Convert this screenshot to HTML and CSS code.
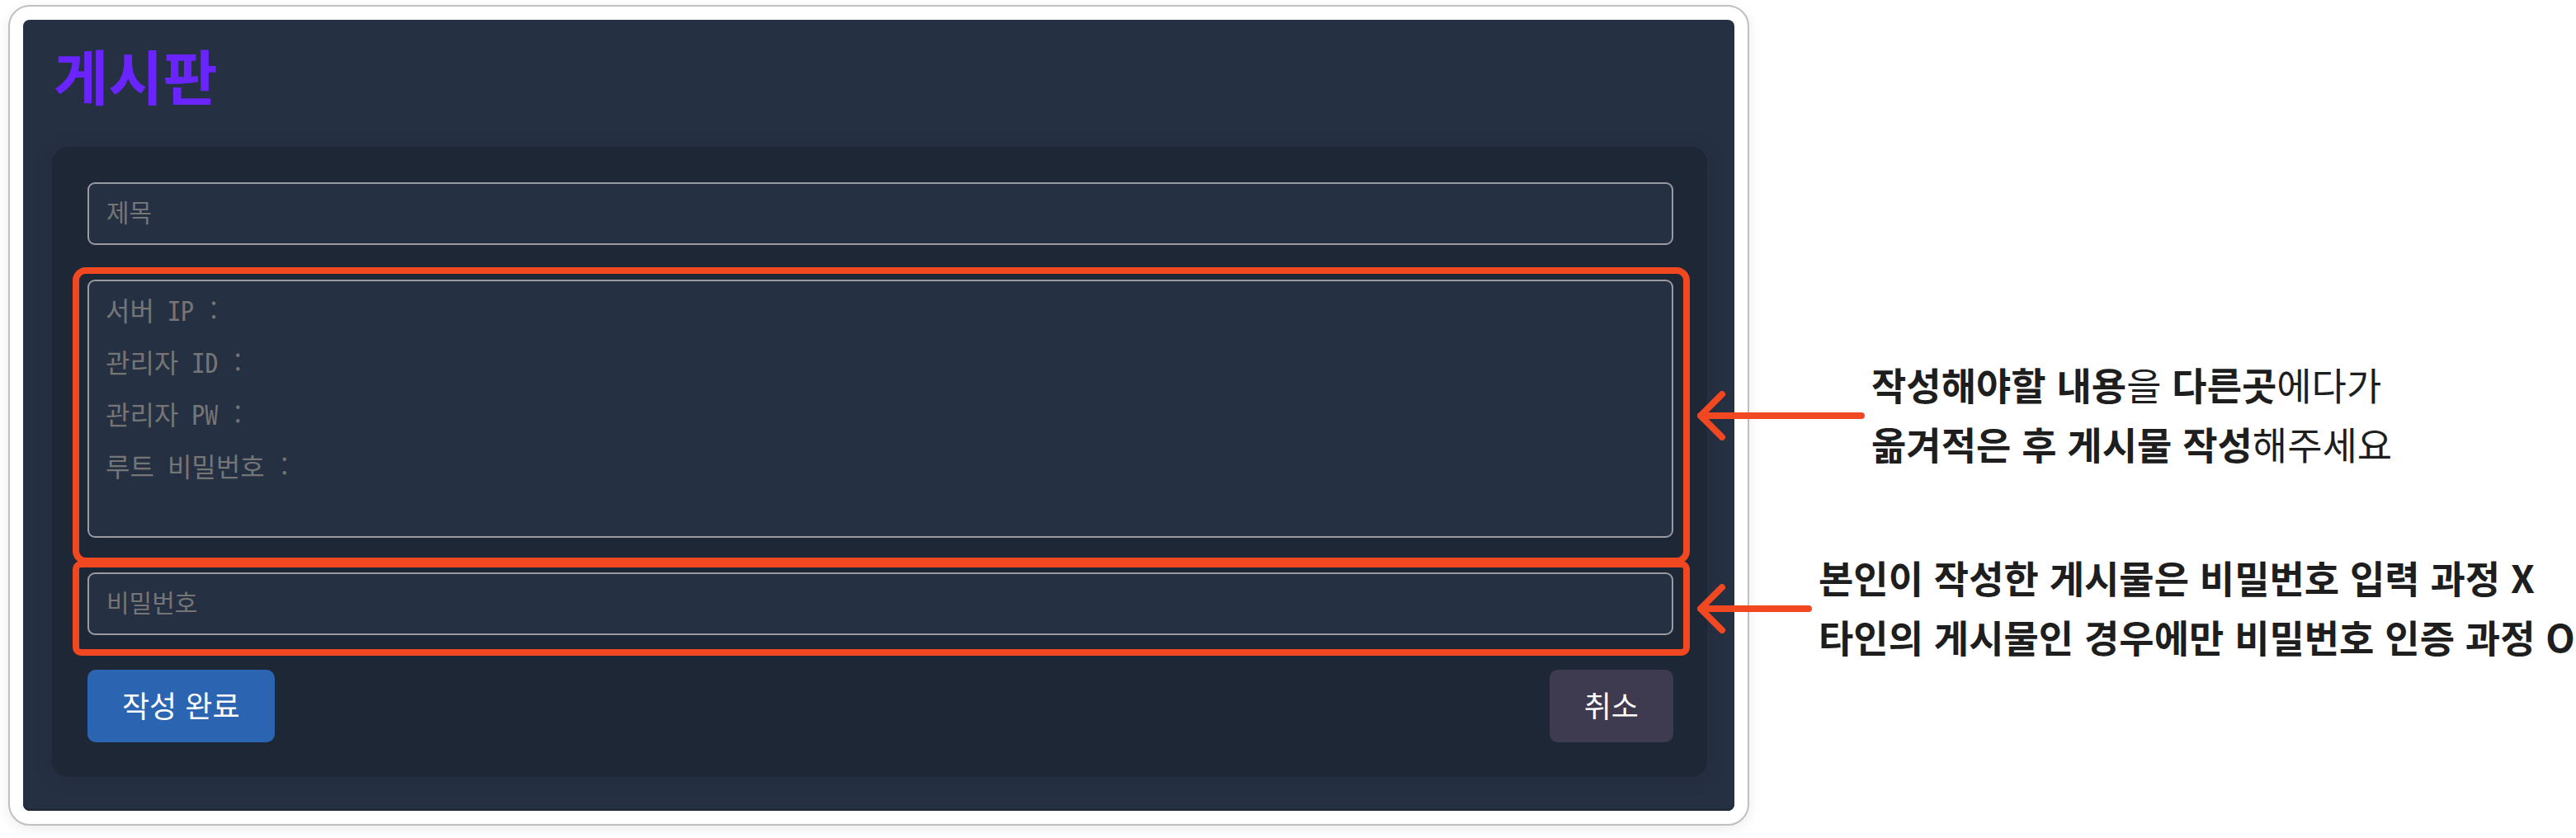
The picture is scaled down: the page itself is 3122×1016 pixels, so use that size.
FILE: index.html
```html
<!DOCTYPE html>
<html lang="ko">
<head>
  <meta charset="utf-8">
  <meta name="viewport" content="width=device-width, initial-scale=1">
  <title>게시판</title>
  <link rel="stylesheet" href="styles.css">
</head>
<body>
  <main class="guide">
    <section class="frame">
      <div class="board">
        <h1 class="board-title">게시판</h1>
        <form class="card">
          <div class="field">
            <input class="control" type="text" aria-label="제목" placeholder="제목">
          </div>
          <div class="field">
            <textarea class="control control-area" aria-label="내용" placeholder="서버 IP :&#10;관리자 ID :&#10;관리자 PW :&#10;루트 비밀번호 :"></textarea>
            <span class="mark mark-content"></span>
          </div>
          <div class="field">
            <input class="control" type="password" aria-label="비밀번호" placeholder="비밀번호">
            <span class="mark mark-password"></span>
          </div>
          <div class="actions">
            <button class="button button-primary" type="submit">작성 완료</button>
            <button class="button button-neutral" type="button">취소</button>
          </div>
        </form>
      </div>
    </section>
    <aside class="notes">
      <div class="note">
        <svg class="arrow" width="203" height="60" viewBox="0 0 203 60" aria-hidden="true">
          <path d="M199 30H4M30 4L4 30L30 56"/>
        </svg>
        <p class="note-text"><strong>작성해야할 내용</strong>을 <strong>다른곳</strong>에다가<br><strong>옮겨적은 후 게시물 작성</strong>해주세요</p>
      </div>
      <div class="note">
        <svg class="arrow" width="139" height="60" viewBox="0 0 139 60" aria-hidden="true">
          <path d="M135 30H4M30 4L4 30L30 56"/>
        </svg>
        <p class="note-text"><strong>본인이 작성한 게시물은 비밀번호 입력 과정 X<br>타인의 게시물인 경우에만 비밀번호 인증 과정 O</strong></p>
      </div>
    </aside>
  </main>
</body>
</html>
```

FILE: styles.css
```css
* {
  box-sizing: border-box;
}

body {
  margin: 0;
  overflow-x: hidden;
  background: #fff;
  color: #1e1e1e;
  font-family: "Noto Sans CJK KR", "Noto Sans", sans-serif;
}

.guide {
  display: grid;
  grid-template-columns: minmax(0, 2110fr) minmax(0, 1002fr);
  align-items: start;
  padding: 6px 0 10px 10px;
}

.frame {
  padding: 16px;
  border: 2px solid #c0c0c0;
  border-radius: 26px;
  background: #fff;
  box-shadow: 0 4px 16px rgba(0, 0, 0, 0.08);
}

.board {
  padding: 14px 33px 41px 35px;
  border-radius: 8px;
  background: #253042;
  box-shadow: inset 0 -2px 1px #1e2635;
}

.board-title {
  margin: 0 0 36px;
  padding-left: 2px;
  color: #6a24ff;
  font-size: 72px;
  font-weight: 700;
  line-height: 104px;
}

.card {
  display: flex;
  flex-direction: column;
  gap: 42px;
  padding: 43px 41px 42px 43px;
  border-radius: 20px;
  background: #1e2735;
  box-shadow: 0 2px 14px 4px #262d42;
}

.field {
  position: relative;
  display: flex;
}

.control {
  width: 100%;
  height: 76px;
  padding: 0 21px 7px;
  border: 2px solid #9c9aa1;
  border-radius: 9px;
  background: #253042;
  color: #fff;
  font: 30px "Noto Sans CJK KR", sans-serif;
}

.control::placeholder {
  color: #757575;
  opacity: 1;
}

.control-area {
  height: 313px;
  padding: 3px 20px;
  font-family: "Noto Sans Mono CJK KR", "Noto Sans CJK KR", monospace;
  font-size: 32px;
  font-weight: 300;
  line-height: 63px;
  resize: none;
}

/* Highlight outlines around the fields the notes refer to */
.mark {
  position: absolute;
  border: 8px solid #f24822;
  pointer-events: none;
}

.mark-content {
  inset: -15px -20px -32px -18px;
  border-radius: 16px;
}

.mark-password {
  inset: -14px -20px -25px -18px;
  border-radius: 10px;
}

.actions {
  display: flex;
  justify-content: space-between;
}

.button {
  height: 88px;
  padding: 0 42px 5px;
  border: 0;
  border-radius: 10px;
  color: #fff;
  font: 36px "Noto Sans CJK KR", sans-serif;
}

.button-primary {
  background: #2b65b1;
}

.button-neutral {
  background: #3e3a50;
}

/* The arrows reach back over the right edge of the frame */
.notes {
  position: relative;
  display: flex;
  flex-direction: column;
  gap: 84px;
  margin-left: -63px;
  padding-top: 423px;
}

.note {
  display: flex;
  align-items: center;
  gap: 8px;
}

.arrow {
  flex: none;
  fill: none;
  stroke: #f24822;
  stroke-width: 8;
  stroke-linecap: round;
  stroke-linejoin: round;
}

.note-text {
  margin: 0;
  padding-bottom: 6px;
  font-size: 46px;
  line-height: 72px;
  white-space: nowrap;
}
```
